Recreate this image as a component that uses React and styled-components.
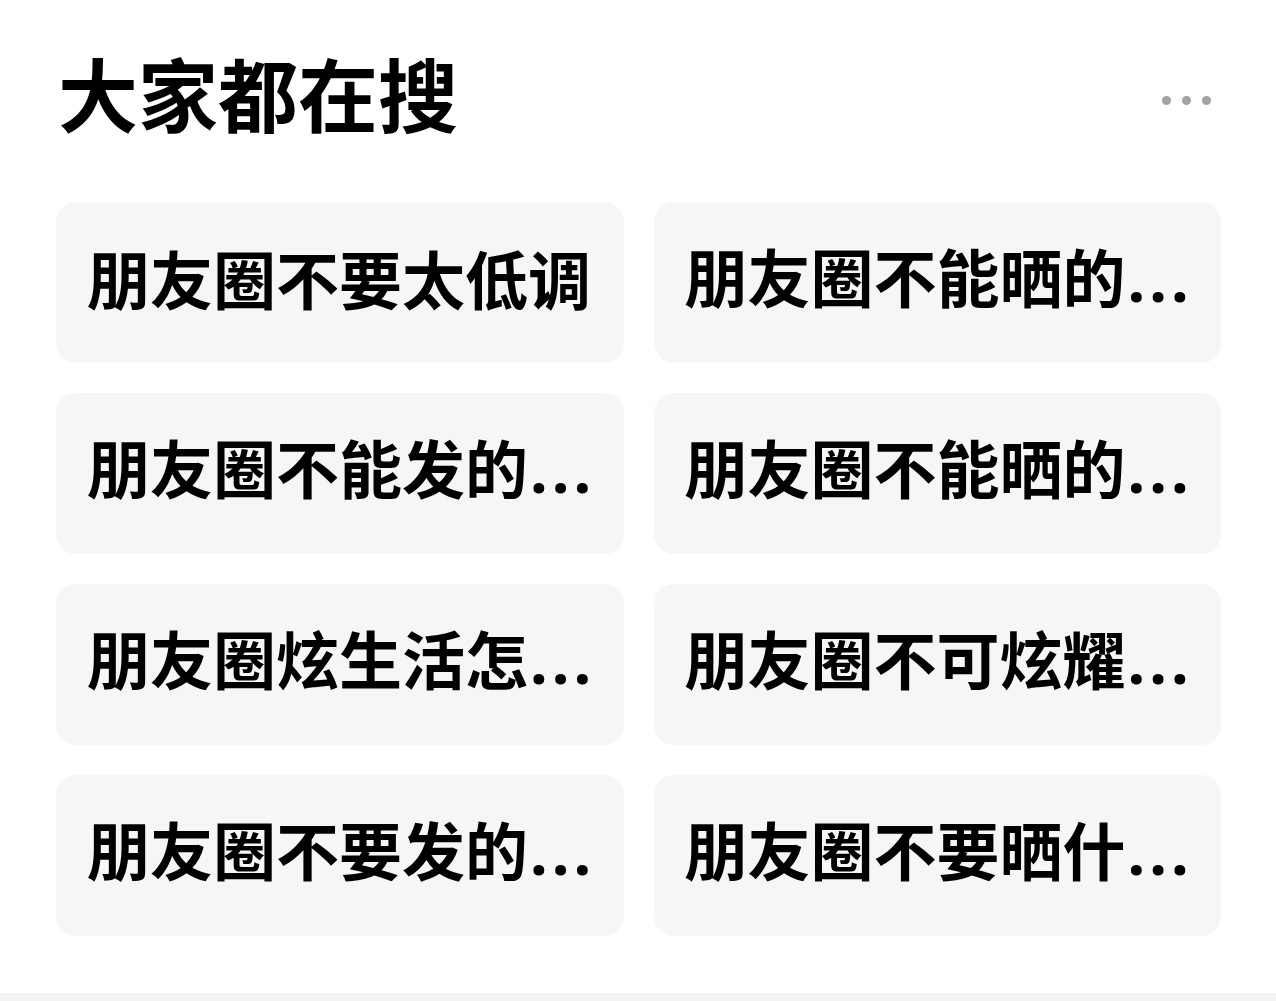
import React from 'react';
import styled, { createGlobalStyle } from 'styled-components';

const GlobalStyle = createGlobalStyle`
  html, body {
    margin: 0;
    padding: 0;
    background: #ffffff;
  }
  body {
    font-family: "Noto Sans CJK SC", "Noto Sans", sans-serif;
    color: #000;
  }
`;

const Page = styled.div`
  min-height: 1001px;
  display: flex;
  flex-direction: column;
`;

const Panel = styled.section`
  flex: 1;
  padding: 34px 55px 56px 56px;
`;

const Header = styled.div`
  display: flex;
  align-items: center;
  justify-content: space-between;
  height: 124px;
  margin-bottom: 44px;
`;

const Title = styled.h2`
  margin: 0 0 10px;
  font-size: 80px;
  font-weight: 700;
  line-height: 1;
  padding-left: 2px;
`;

const More = styled.button`
  display: flex;
  gap: 11px;
  padding: 0 10px 0 0;
  margin-top: 8px;
  border: none;
  background: none;
  cursor: pointer;
`;

const Dot = styled.span`
  width: 9px;
  height: 9px;
  border-radius: 50%;
  background: #a3a3a3;
`;

const Grid = styled.div`
  display: grid;
  grid-template-columns: 1fr 1fr;
  gap: 30px;
`;

const Chip = styled.a`
  display: flex;
  align-items: center;
  height: 161px;
  padding: 0 30px 12px 31px;
  box-sizing: border-box;
  border-radius: 20px;
  background: #f6f6f6;
  color: #000;
  text-decoration: none;
  font-size: 63px;
  font-weight: 700;
  min-width: 0;
`;

const ChipText = styled.span`
  display: block;
  white-space: nowrap;
  line-height: 1.2;
`;

const Ellipsis = styled.span`
  font-family: "Noto Sans", sans-serif;
  letter-spacing: 4px;
  margin-left: 2px;
`;

const FooterBar = styled.div`
  height: 8px;
  background: #f2f3f5;
`;

const MAX_CHARS = 8;

const searches = [
  '朋友圈不要太低调',
  '朋友圈不能晒的东西',
  '朋友圈不能发的东西',
  '朋友圈不能晒的三样东西',
  '朋友圈炫生活怎么发',
  '朋友圈不可炫耀的东西',
  '朋友圈不要发的内容',
  '朋友圈不要晒什么东西',
];

function Query({ text }) {
  if (text.length <= MAX_CHARS) return <ChipText>{text}</ChipText>;
  return (
    <ChipText title={text}>
      {text.slice(0, MAX_CHARS - 1)}
      <Ellipsis>...</Ellipsis>
    </ChipText>
  );
}

export default function App() {
  return (
    <Page>
      <GlobalStyle />
      <Panel>
        <Header>
          <Title>大家都在搜</Title>
          <More aria-label="更多">
            <Dot />
            <Dot />
            <Dot />
          </More>
        </Header>
        <Grid>
          {searches.map((q, i) => (
            <Chip key={i} href="#">
              <Query text={q} />
            </Chip>
          ))}
        </Grid>
      </Panel>
      <FooterBar />
    </Page>
  );
}
